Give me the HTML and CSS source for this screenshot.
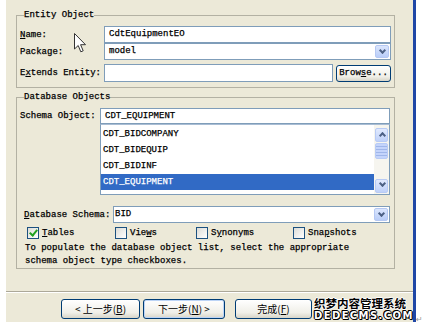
FILE: index.html
```html
<!DOCTYPE html>
<html lang="en">
<head>
    <meta charset="UTF-8">
    <title>Create Entity Object</title>
    <link rel="stylesheet" href="styles.css">
</head>
<body>
    <div class="screen">
        <div class="dialog">
            <fieldset class="group entity">
                <legend>Entity Object</legend>
                <div class="row">
                    <label><u>N</u>ame:</label>
                    <div class="field">CdtEquipmentEO</div>
                </div>
                <div class="row">
                    <label>Package:</label>
                    <div class="field combo">model<span class="arrow"></span></div>
                </div>
                <div class="row extends">
                    <label>E<u>x</u>tends Entity:</label>
                    <div class="field"></div>
                    <div class="btn small">Brow<u>s</u>e...</div>
                </div>
            </fieldset>

            <fieldset class="group dbobjects">
                <legend>Database Objects</legend>
                <div class="row schema-obj">
                    <label>Schema Object:</label>
                    <div class="picker">
                        <div class="field">CDT_EQUIPMENT</div>
                        <div class="list">
                            <div class="items">
                                <div class="item">CDT_BIDCOMPANY</div>
                                <div class="item">CDT_BIDEQUIP</div>
                                <div class="item">CDT_BIDINF</div>
                                <div class="item selected">CDT_EQUIPMENT</div>
                                <div class="item">CDT_EXPORTPLAN</div>
                            </div>
                            <div class="scrollbar">
                                <span class="sb-btn up"></span>
                                <span class="sb-thumb"></span>
                                <span class="sb-track"></span>
                                <span class="sb-btn down"></span>
                            </div>
                        </div>
                    </div>
                </div>
                <div class="row db-schema">
                    <label><u>D</u>atabase Schema:</label>
                    <div class="field combo">BID<span class="arrow"></span></div>
                </div>
                <div class="checks">
                    <span class="check c-tables"><span class="box checked"></span><u>T</u>ables</span>
                    <span class="check c-views"><span class="box"></span>Vie<u>w</u>s</span>
                    <span class="check c-syn"><span class="box"></span>S<u>y</u>nonyms</span>
                    <span class="check c-snap"><span class="box"></span>Sna<u>p</u>shots</span>
                </div>
                <p class="hint">To populate the database object list, select the appropriate<br>schema object type checkboxes.</p>
            </fieldset>

            <div class="separator"></div>

            <div class="buttons">
                <div class="btn nav">&lt; 上一步(<u>B</u>)</div>
                <div class="btn nav default">下一步(<u>N</u>) &gt;</div>
                <div class="btn nav finish">完成(<u>F</u>)</div>
            </div>
        </div>

        <svg class="cursor" width="13" height="20" viewBox="0 0 13 20">
            <path d="M0.5 0.5 L0.5 16 L4.2 12.5 L6.8 18.8 L9.2 17.8 L6.6 11.7 L11.5 11.7 Z" fill="#fff" stroke="#333" stroke-width="1"/>
        </svg>

        <div class="watermark">
            <div class="wm-cn">织梦内容管理系统</div>
            <div class="wm-en">DEDECMS.COM</div>
        </div>
        <span class="para-mark">↵</span>
    </div>
</body>
</html>
```

FILE: styles.css
```css
body {
    margin: 0;
    background: #fff;
    font-family: "Liberation Mono", monospace;
    font-size: 9px;
    color: #000;
    -webkit-text-stroke: 0.25px #000;
}
.screen {
    position: relative;
    width: 424px;
    height: 332px;
}
.dialog {
    margin-left: 6px;
    width: 410px;
    height: 322px;
    box-sizing: border-box;
    padding-top: 10px;
    background: #ece9d8;
    border-right: 3px solid #1f47a6;
}

/* group boxes */
.group {
    margin: 0 0 0 10px;
    width: 379px;
    min-width: 0;
    box-sizing: border-box;
    border: 1px solid #b3b1a3;
    padding: 0 3px 6px 3px;
}
.group legend {
    padding: 0;
    margin-left: 4px;
    line-height: 11px;
}
.entity .row:first-of-type {
    margin-top: 5px;
}
.row {
    display: flex;
    align-items: center;
}
.row label {
    width: 84px;
    flex: none;
}
.field {
    position: relative;
    flex: 1;
    height: 17px;
    line-height: 15px;
    box-sizing: border-box;
    border: 1px solid #7f9db9;
    background: #fff;
    padding-left: 4px;
    white-space: nowrap;
}
.row.extends {
    margin-top: 4px;
}
.extends .field {
    height: 18px;
}
.entity {
    padding-bottom: 5px;
}

/* combo arrow */
.arrow {
    position: absolute;
    right: 1px;
    top: 1px;
    width: 14px;
    height: 13px;
    box-sizing: border-box;
    border: 1px solid #b5c8f3;
    border-radius: 2px;
    background: linear-gradient(#dbe6fd, #b9cdf8);
}
.arrow::after,
.sb-btn::after {
    content: "";
    position: absolute;
    left: 4px;
    top: 2px;
    width: 3px;
    height: 3px;
    border-right: 2px solid #4d6185;
    border-bottom: 2px solid #4d6185;
    transform: rotate(45deg);
}

/* buttons */
.btn {
    box-sizing: border-box;
    border: 1px solid #003c74;
    border-radius: 3px;
    background: linear-gradient(#fff, #f0efe8 70%, #d8d5c8);
    text-align: center;
    white-space: nowrap;
}
.btn.small {
    width: 55px;
    height: 17px;
    line-height: 15px;
    margin-left: 3px;
    flex: none;
}

/* database objects */
.dbobjects {
    margin-top: 4px;
    padding-bottom: 0;
}
.schema-obj {
    margin-top: 5px;
    align-items: flex-start;
}
.schema-obj label {
    width: 80px;
    line-height: 16px;
}
.picker {
    flex: 1;
    margin-right: 1px;
}
.picker .field {
    height: 16px;
    line-height: 14px;
}
.list {
    position: relative;
    height: 69px;
    border: 1px solid #7f9db9;
    border-top: 1px solid #a9bdd4;
    background: #fff;
    overflow: hidden;
    display: flex;
}
.items {
    flex: 1;
    padding-top: 1px;
}
.item {
    height: 16px;
    line-height: 16px;
    padding-left: 2px;
}
.item.selected {
    background: #316ac5;
    color: #fff;
    -webkit-text-stroke: 0.25px #fff;
}
.scrollbar {
    width: 15px;
    flex: none;
    display: flex;
    flex-direction: column;
    background: #f6f5ef;
    padding: 3px 0 1px;
    box-sizing: border-box;
}
.sb-btn {
    position: relative;
    height: 12px;
    margin: 0 1px;
    border: 1px solid #b8cbf5;
    border-radius: 2px;
    background: linear-gradient(#e1eafe, #bfd1f9);
}
.sb-btn.up::after {
    top: 4px;
    transform: rotate(-135deg);
}
.sb-btn.down::after {
    top: 1px;
}
.sb-thumb {
    height: 14px;
    margin: 1px 1px 0;
    border: 1px solid #b8cbf5;
    border-radius: 2px;
    background: repeating-linear-gradient(#c4d4fb 0 2px, #9fb6ea 2px 3px);
}
.sb-track {
    flex: 1;
}
.db-schema {
    margin-top: 11px;
}
.db-schema label {
    width: 89px;
    padding-left: 4px;
}
.db-schema .field {
    padding-left: 1px;
    margin-right: 1px;
}

/* checkboxes */
.checks {
    display: flex;
    height: 14px;
    align-items: center;
    margin-top: 3px;
    padding-left: 7px;
}
.check {
    display: flex;
    align-items: center;
}
.c-tables { width: 88px; }
.c-views { width: 81px; }
.c-syn { width: 97px; }
.box {
    position: relative;
    width: 12px;
    height: 12px;
    box-sizing: border-box;
    border: 1px solid #1c5180;
    background: linear-gradient(135deg, #dcdcd7, #fff);
    margin-right: 3px;
}
.box.checked::after {
    content: "";
    position: absolute;
    left: 3px;
    top: 0;
    width: 3px;
    height: 6px;
    border-right: 2px solid #21a121;
    border-bottom: 2px solid #21a121;
    transform: rotate(40deg);
}
.hint {
    margin: 2px 0 0 5px;
    line-height: 13px;
}

/* bottom button bar */
.separator {
    margin-top: 22px;
    border-top: 1px solid #aca899;
    border-bottom: 1px solid #fff;
}
.buttons {
    display: flex;
    margin-top: 6px;
    padding-left: 55px;
    font-family: "Noto Sans CJK SC", sans-serif;
    font-size: 10px;
    -webkit-text-stroke: 0;
}
.btn.nav {
    width: 79px;
    height: 20px;
    line-height: 18px;
    margin-right: 3px;
}
.btn.nav.default {
    width: 82px;
    box-shadow: inset 0 0 0 1px #bcd4f6;
}
.btn.nav.finish {
    margin-left: 7px;
    width: 77px;
}

/* overlays */
.cursor {
    position: absolute;
    left: 74px;
    top: 33px;
}
.watermark {
    position: absolute;
    left: 314px;
    top: 297px;
    font-weight: bold;
    -webkit-text-stroke: 0;
}
.wm-cn {
    font-family: "Noto Sans CJK SC", sans-serif;
    font-size: 11.5px;
    line-height: 13px;
    color: #000;
    text-shadow: 1px 0 #fff, -1px 0 #fff, 0 1px #fff, 0 -1px #fff;
}
.wm-en {
    font-family: "DejaVu Sans", sans-serif;
    font-size: 10px;
    line-height: 12px;
    letter-spacing: 1.4px;
    color: #fff;
    text-shadow: 1px 0 #000, -1px 0 #000, 0 1px #000, 0 -1px #000, 1px 1px #000, -1px -1px #000;
}
.para-mark {
    position: absolute;
    left: 416px;
    top: 315px;
    font-family: "DejaVu Sans", sans-serif;
    font-size: 8px;
    color: #999;
    -webkit-text-stroke: 0;
}
```
